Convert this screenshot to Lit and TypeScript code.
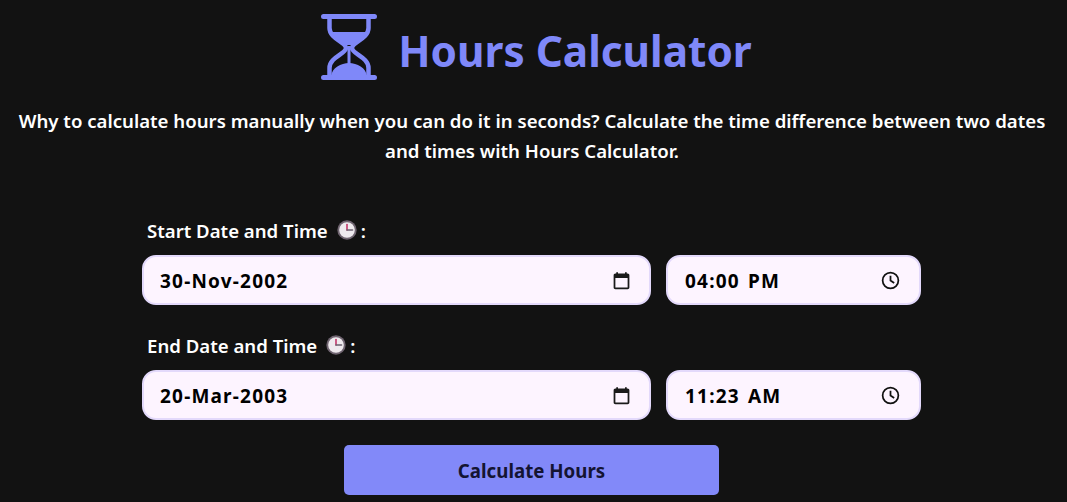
import { LitElement, html, css, svg } from "lit";
import { customElement } from "lit/decorators.js";

const hourglass = html`<svg class="glass" viewBox="0 0 58 68" width="58" height="68" fill="none">
  <path d="M3.500 2.500H54.500M3.500 63.500H54.500" stroke="#7f88f9" stroke-width="5" stroke-linecap="round"/>
  <path d="M9.500 3V14C9.500 25 26 28 26 34C26 40 9.500 43 9.500 54V62M48.500 3V14C48.500 25 32 28 32 34C32 40 48.500 43 48.500 54V62" stroke="#7f88f9" stroke-width="4.500"/>
  <path d="M11 18C14 24 21 27 26 31H32C37 27 44 24 47 18Z" fill="#7f88f9"/>
  <path d="M27.500 32H30.500V50H27.500Z" fill="#7f88f9"/>
  <path d="M11 62C12 54 21 49 29 49C37 49 46 54 47 62Z" fill="#7f88f9"/>
</svg>`;

const clockEmoji = html`<svg class="emoji" viewBox="0 0 20 20" width="20" height="20">
  <circle cx="10" cy="10" r="9.700" fill="#6f6470"/>
  <circle cx="10" cy="10" r="7.800" fill="#eeeaee"/>
  <path d="M10 4.500V10" stroke="#c2386b" stroke-width="1.600" stroke-linecap="round"/>
  <path d="M10 10H15.500" stroke="#6b6270" stroke-width="1.600" stroke-linecap="round"/>
</svg>`;

const calendar = svg`<path d="M19 4h-1V2.500h-2V4H8V2.500H6V4H5C3.900 4 3 4.900 3 6v14c0 1.100.9 2 2 2h14c1.100 0 2-.9 2-2V6c0-1.100-.9-2-2-2zm0 16H5V9h14v11z" fill="#1a1a1a"/>`;
const clock = svg`<circle cx="12" cy="12" r="9" fill="none" stroke="#111" stroke-width="2"/><path d="M12 6.500V12L16.200 14.800" fill="none" stroke="#111" stroke-width="2"/>`;

@customElement("app-root")
export class AppRoot extends LitElement {
  static styles = css`
    :host {
      display: block;
      height: 502px;
      overflow: hidden;
      background: #121212;
      color: #fff;
      font-family: "Noto Sans", "Open Sans", sans-serif;
    }
    header {
      display: flex;
      justify-content: center;
      align-items: center;
      gap: 20px;
      padding: 13px 0 0 5px;
      height: 70px;
    }
    .glass { display: block; }
    h1 {
      margin: 0;
      padding-top: 6px;
      font-size: 42.300px;
      line-height: 70px;
      font-weight: 700;
      color: #7f88f9;
    }
    .intro {
      margin: 23px 0 0;
      padding-right: 3px;
      text-align: center;
      font-size: 18.620px;
      line-height: 30px;
      font-weight: 600;
      white-space: nowrap;
    }
    form {
      width: 779px;
      margin: 49px 0 0 142px;
      display: flex;
      flex-direction: column;
    }
    .label {
      display: flex;
      align-items: center;
      gap: 9px;
      margin-left: 5px;
      height: 30px;
      font-size: 18.600px;
      font-weight: 600;
      margin-bottom: 10px;
    }
    .colon { margin-left: -5px; }
    .row {
      display: grid;
      grid-template-columns: 509px 255px;
      gap: 15px;
      margin-bottom: 25px;
    }
    .field {
      box-sizing: border-box;
      height: 50px;
      display: flex;
      align-items: center;
      justify-content: space-between;
      padding: 0 17px 0 16px;
      background: #fdf4ff;
      border: 2px solid #e3d9fb;
      border-radius: 14px;
      color: #000;
      font-size: 19px;
      font-weight: 700;
      letter-spacing: 1.200px;
      word-spacing: 2px;
    }
    .field span { padding-top: 2px; }
    .field svg { display: block; }
    .time span { margin-left: 1px; }
    .time svg { margin-right: 1px; }
    button {
      align-self: center;
      width: 375px;
      height: 50px;
      border: none;
      border-radius: 5px;
      background: #8289f9;
      color: #141432;
      font: 700 18.700px "Noto Sans", "Open Sans", sans-serif;
    }
  `;

  private row(label: string, date: string, time: string) {
    return html`
      <div class="label"><span>${label}</span>${clockEmoji}<span class="colon">:</span></div>
      <div class="row">
        <div class="field"><span>${date}</span><svg viewBox="0 0 24 24" width="21" height="21">${calendar}</svg></div>
        <div class="field time"><span>${time}</span><svg viewBox="0 0 24 24" width="21" height="21">${clock}</svg></div>
      </div>
    `;
  }

  render() {
    return html`
      <header>${hourglass}<h1>Hours Calculator</h1></header>
      <p class="intro">Why to calculate hours manually when you can do it in seconds? Calculate the time difference between two dates<br />and times with Hours Calculator.</p>
      <form>
        ${this.row("Start Date and Time", "30-Nov-2002", "04:00 PM")}
        ${this.row("End Date and Time", "20-Mar-2003", "11:23 AM")}
        <button type="button">Calculate Hours</button>
      </form>
    `;
  }
}
